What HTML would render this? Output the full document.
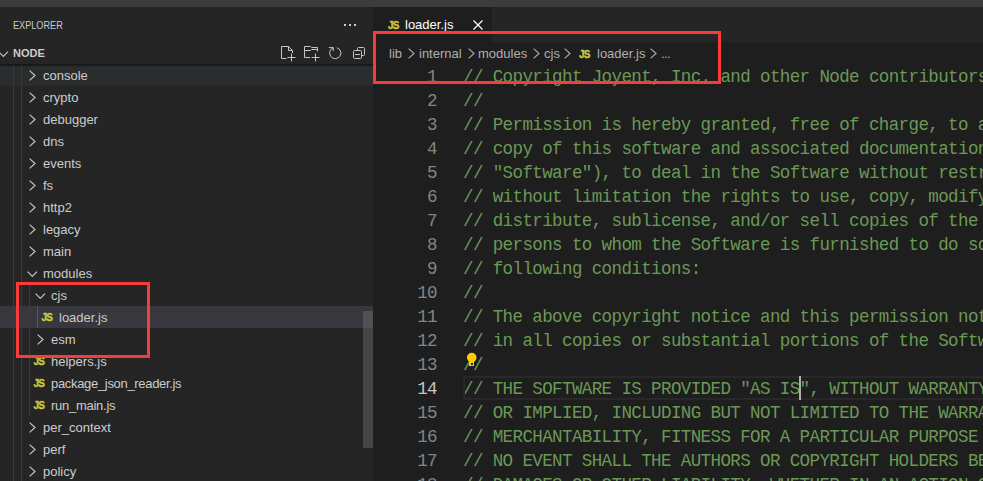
<!DOCTYPE html>
<html><head><meta charset="utf-8"><style>
*{box-sizing:border-box;margin:0;padding:0}
html,body{width:983px;height:481px;overflow:hidden;background:#1e1e1e}
body{position:relative;font-family:"Liberation Sans",sans-serif;}
.a{position:absolute}
#topstrip{left:0;top:0;width:983px;height:7px;background:#3c3c3c}
#sidebar{left:0;top:7px;width:373px;height:474px;background:#252526;overflow:hidden}
#title{left:13px;top:1px;height:35px;line-height:35px;font-size:11px;color:#cccccc;transform-origin:0 50%;transform:scaleX(0.83);white-space:nowrap}
#hdrtext{left:13px;top:35px;line-height:22px;font-size:11px;font-weight:bold;color:#cccccc}
.row{position:absolute;left:0;width:373px;height:22px;line-height:22px;font-size:13px;color:#cccccc;white-space:nowrap}
.row .t{position:absolute;top:1px}
svg{position:absolute;overflow:visible}
.guide{position:absolute;width:1px;background:#3a3a3a}
.js{position:absolute;font-weight:bold;color:#cbcb41;font-size:10px;letter-spacing:-0.9px;line-height:22px;-webkit-text-stroke:0.35px #cbcb41}
#editor{left:373px;top:7px;width:610px;height:474px;background:#1e1e1e;overflow:hidden}
#tabbar{left:0;top:0;width:610px;height:35px;background:#252526}
#tab{left:0;top:0;width:119px;height:35px;background:#1e1e1e}
#tabtxt{left:32px;top:0;line-height:35px;font-size:13px;color:#ffffff}
.crumb{position:absolute;top:36px;line-height:22px;font-size:13px;color:#b0b0b0;white-space:nowrap}
.code{position:absolute;left:0;width:610px;height:24px;line-height:24px;font-family:"Liberation Mono",monospace;font-size:17.5px;letter-spacing:-0.6017px;white-space:pre}
.ln{position:absolute;top:1px;right:546px;text-align:right;color:#858585}
.cm{position:absolute;top:1px;left:90px;color:#6a9955}
.redbox{position:absolute;border:3px solid #fb3b3b}
</style></head><body>
<div id="topstrip" class="a"></div>
<div id="sidebar" class="a"><div id="title" class="a">EXPLORER</div><div class="a" style="left:344px;top:17px;width:2px;height:2px;background:#cccccc"></div><div class="a" style="left:349px;top:17px;width:2px;height:2px;background:#cccccc"></div><div class="a" style="left:354px;top:17px;width:2px;height:2px;background:#cccccc"></div><svg class="a" style="left:-2px;top:44px" width="12" height="8"><polyline points="0.6,0.6 5.3,5.3 10,0.6" fill="none" stroke="#c5c5c5" stroke-width="1.2"/></svg><div id="hdrtext" class="a">NODE</div><div class="row" style="top:57px;background:#2a2d2e;"><svg class="a" style="left:29px;top:6px" width="8" height="12"><polyline points="0.6,0.6 6.0,5.5 0.6,10.4" fill="none" stroke="#c5c5c5" stroke-width="1.2"/></svg><span class="t" style="left:43px">console</span></div><div class="row" style="top:79px;"><svg class="a" style="left:29px;top:6px" width="8" height="12"><polyline points="0.6,0.6 6.0,5.5 0.6,10.4" fill="none" stroke="#c5c5c5" stroke-width="1.2"/></svg><span class="t" style="left:43px">crypto</span></div><div class="row" style="top:101px;"><svg class="a" style="left:29px;top:6px" width="8" height="12"><polyline points="0.6,0.6 6.0,5.5 0.6,10.4" fill="none" stroke="#c5c5c5" stroke-width="1.2"/></svg><span class="t" style="left:43px">debugger</span></div><div class="row" style="top:123px;"><svg class="a" style="left:29px;top:6px" width="8" height="12"><polyline points="0.6,0.6 6.0,5.5 0.6,10.4" fill="none" stroke="#c5c5c5" stroke-width="1.2"/></svg><span class="t" style="left:43px">dns</span></div><div class="row" style="top:145px;"><svg class="a" style="left:29px;top:6px" width="8" height="12"><polyline points="0.6,0.6 6.0,5.5 0.6,10.4" fill="none" stroke="#c5c5c5" stroke-width="1.2"/></svg><span class="t" style="left:43px">events</span></div><div class="row" style="top:167px;"><svg class="a" style="left:29px;top:6px" width="8" height="12"><polyline points="0.6,0.6 6.0,5.5 0.6,10.4" fill="none" stroke="#c5c5c5" stroke-width="1.2"/></svg><span class="t" style="left:43px">fs</span></div><div class="row" style="top:189px;"><svg class="a" style="left:29px;top:6px" width="8" height="12"><polyline points="0.6,0.6 6.0,5.5 0.6,10.4" fill="none" stroke="#c5c5c5" stroke-width="1.2"/></svg><span class="t" style="left:43px">http2</span></div><div class="row" style="top:211px;"><svg class="a" style="left:29px;top:6px" width="8" height="12"><polyline points="0.6,0.6 6.0,5.5 0.6,10.4" fill="none" stroke="#c5c5c5" stroke-width="1.2"/></svg><span class="t" style="left:43px">legacy</span></div><div class="row" style="top:233px;"><svg class="a" style="left:29px;top:6px" width="8" height="12"><polyline points="0.6,0.6 6.0,5.5 0.6,10.4" fill="none" stroke="#c5c5c5" stroke-width="1.2"/></svg><span class="t" style="left:43px">main</span></div><div class="row" style="top:255px;"><svg class="a" style="left:27px;top:9px" width="12" height="8"><polyline points="0.6,0.6 5.3,5.3 10,0.6" fill="none" stroke="#c5c5c5" stroke-width="1.2"/></svg><span class="t" style="left:43px">modules</span></div><div class="row" style="top:277px;"><svg class="a" style="left:35px;top:9px" width="12" height="8"><polyline points="0.6,0.6 5.3,5.3 10,0.6" fill="none" stroke="#c5c5c5" stroke-width="1.2"/></svg><span class="t" style="left:51px">cjs</span></div><div class="row" style="top:299px;background:#37373d;"><span class="js" style="left:41.5px;top:1px">JS</span><span class="t" style="left:59px">loader.js</span></div><div class="row" style="top:321px;"><svg class="a" style="left:37px;top:6px" width="8" height="12"><polyline points="0.6,0.6 6.0,5.5 0.6,10.4" fill="none" stroke="#c5c5c5" stroke-width="1.2"/></svg><span class="t" style="left:51px">esm</span></div><div class="row" style="top:343px;"><span class="js" style="left:33.5px;top:1px">JS</span><span class="t" style="left:51px">helpers.js</span></div><div class="row" style="top:365px;"><span class="js" style="left:33.5px;top:1px">JS</span><span class="t" style="left:51px"><span style="letter-spacing:-0.32px">package_json_reader.js</span></span></div><div class="row" style="top:387px;"><span class="js" style="left:33.5px;top:1px">JS</span><span class="t" style="left:51px"><span style="letter-spacing:-0.27px">run_main.js</span></span></div><div class="row" style="top:409px;"><svg class="a" style="left:29px;top:6px" width="8" height="12"><polyline points="0.6,0.6 6.0,5.5 0.6,10.4" fill="none" stroke="#c5c5c5" stroke-width="1.2"/></svg><span class="t" style="left:43px">per_context</span></div><div class="row" style="top:431px;"><svg class="a" style="left:29px;top:6px" width="8" height="12"><polyline points="0.6,0.6 6.0,5.5 0.6,10.4" fill="none" stroke="#c5c5c5" stroke-width="1.2"/></svg><span class="t" style="left:43px">perf</span></div><div class="row" style="top:453px;"><svg class="a" style="left:29px;top:6px" width="8" height="12"><polyline points="0.6,0.6 6.0,5.5 0.6,10.4" fill="none" stroke="#c5c5c5" stroke-width="1.2"/></svg><span class="t" style="left:43px">policy</span></div><div class="guide" style="left:13px;top:57px;height:430px"></div><div class="guide" style="left:21px;top:57px;height:430px"></div><div class="guide" style="left:29px;top:277px;height:132px"></div><div class="guide" style="left:37px;top:299px;height:22px;background:#585858"></div><div class="a" style="left:0;top:57px;width:373px;height:3px;background:linear-gradient(rgba(0,0,0,0.6),rgba(0,0,0,0))"></div><div class="a" style="left:363px;top:304px;width:10px;height:137px;background:rgba(121,121,121,0.4)"></div></div>
<div id="editor" class="a"><div id="tabbar" class="a"></div><div id="tab" class="a"><span class="js" style="left:15px;top:7.5px">JS</span><div id="tabtxt" class="a">loader.js</div><svg class="a" style="left:100px;top:13px" width="10" height="10"><path d="M0.5 0.5L9.5 9.5M9.5 0.5L0.5 9.5" stroke="#ffffff" stroke-width="1.2"/></svg></div><span class="crumb" style="left:16px">lib</span><svg class="a" style="left:35px;top:41px" width="8" height="12"><polyline points="0.6,0.6 6.0,5.5 0.6,10.4" fill="none" stroke="#a9a9a9" stroke-width="1.2"/></svg><span class="crumb" style="left:46px">internal</span><svg class="a" style="left:95px;top:41px" width="8" height="12"><polyline points="0.6,0.6 6.0,5.5 0.6,10.4" fill="none" stroke="#a9a9a9" stroke-width="1.2"/></svg><span class="crumb" style="left:105px">modules</span><svg class="a" style="left:160px;top:41px" width="8" height="12"><polyline points="0.6,0.6 6.0,5.5 0.6,10.4" fill="none" stroke="#a9a9a9" stroke-width="1.2"/></svg><span class="crumb" style="left:171px">cjs</span><svg class="a" style="left:191px;top:41px" width="8" height="12"><polyline points="0.6,0.6 6.0,5.5 0.6,10.4" fill="none" stroke="#a9a9a9" stroke-width="1.2"/></svg><span class="js" style="left:206px;top:37px">JS</span><span class="crumb" style="left:224px">loader.js</span><svg class="a" style="left:277px;top:41px" width="8" height="12"><polyline points="0.6,0.6 6.0,5.5 0.6,10.4" fill="none" stroke="#a9a9a9" stroke-width="1.2"/></svg><span class="crumb" style="left:288px;letter-spacing:-0.6px">...</span><div class="code" style="top:57px"><span class="ln" style="color:#858585">1</span><span class="cm">// Copyright Joyent, Inc. and other Node contributors.</span></div><div class="code" style="top:81px"><span class="ln" style="color:#858585">2</span><span class="cm">//</span></div><div class="code" style="top:105px"><span class="ln" style="color:#858585">3</span><span class="cm">// Permission is hereby granted, free of charge, to any person obtaining a</span></div><div class="code" style="top:129px"><span class="ln" style="color:#858585">4</span><span class="cm">// copy of this software and associated documentation files (the</span></div><div class="code" style="top:153px"><span class="ln" style="color:#858585">5</span><span class="cm">// &quot;Software&quot;), to deal in the Software without restriction, including</span></div><div class="code" style="top:177px"><span class="ln" style="color:#858585">6</span><span class="cm">// without limitation the rights to use, copy, modify, merge, publish,</span></div><div class="code" style="top:201px"><span class="ln" style="color:#858585">7</span><span class="cm">// distribute, sublicense, and/or sell copies of the Software, and to permit</span></div><div class="code" style="top:225px"><span class="ln" style="color:#858585">8</span><span class="cm">// persons to whom the Software is furnished to do so, subject to the</span></div><div class="code" style="top:249px"><span class="ln" style="color:#858585">9</span><span class="cm">// following conditions:</span></div><div class="code" style="top:273px"><span class="ln" style="color:#858585">10</span><span class="cm">//</span></div><div class="code" style="top:297px"><span class="ln" style="color:#858585">11</span><span class="cm">// The above copyright notice and this permission notice shall be included</span></div><div class="code" style="top:321px"><span class="ln" style="color:#858585">12</span><span class="cm">// in all copies or substantial portions of the Software.</span></div><div class="code" style="top:345px"><span class="ln" style="color:#858585">13</span><span class="cm">//</span></div><div class="code" style="top:369px"><span class="ln" style="color:#c6c6c6">14</span><span class="cm">// THE SOFTWARE IS PROVIDED &quot;AS IS&quot;, WITHOUT WARRANTY OF ANY KIND, EXPRESS</span></div><div class="code" style="top:393px"><span class="ln" style="color:#858585">15</span><span class="cm">// OR IMPLIED, INCLUDING BUT NOT LIMITED TO THE WARRANTIES OF</span></div><div class="code" style="top:417px"><span class="ln" style="color:#858585">16</span><span class="cm">// MERCHANTABILITY, FITNESS FOR A PARTICULAR PURPOSE AND NONINFRINGEMENT. IN</span></div><div class="code" style="top:441px"><span class="ln" style="color:#858585">17</span><span class="cm">// NO EVENT SHALL THE AUTHORS OR COPYRIGHT HOLDERS BE LIABLE FOR ANY CLAIM,</span></div><div class="code" style="top:465px"><span class="ln" style="color:#858585">18</span><span class="cm">// DAMAGES OR OTHER LIABILITY, WHETHER IN AN ACTION OF CONTRACT, TORT OR</span></div><div class="a" style="left:90px;top:369px;width:520px;height:24px;border:2px solid #282828;border-right:none"></div><div class="a" style="left:426px;top:369px;width:2px;height:24px;background:#aeafad"></div><svg class="a" style="left:0;top:0" width="610" height="474"><circle cx="98.75" cy="350.6" r="4.8" fill="#ffcc00"/><rect x="96" y="352" width="5" height="7" fill="#ffcc00"/><rect x="98" y="356" width="2" height="2" fill="#1e1e1e"/></svg></div>
<svg class="a" style="left:0;top:0" width="983" height="481" fill="none" stroke="#c5c5c5" stroke-width="1"><path d="M286.5 58.5H281.5V46.5H288.5L292.5 50.5V53"/><path d="M288.5 46.5V50.5H292.5"/><path d="M287.5 57.5H295.5M291.5 53.5V61.5"/><path d="M310 57.5H304.5V46.5H310.5L311.5 47.5H317.5V51.5"/><path d="M304.5 50.5H310.5L311.5 49.5H317.5"/><path d="M311.5 57.5H319.5M315.5 53.5V61.5"/><path d="M333.3 47.8A5.6 5.6 0 1 0 336.9 47.7"/><path d="M328.8 47.6H333.3V51.1"/><rect x="353.5" y="50.5" width="8" height="8" rx="1"/><path d="M357.5 50.5V48.5Q357.5 47.5 358.5 47.5H363.5Q364.5 47.5 364.5 48.5V54.5Q364.5 55.5 363.5 55.5H361.5"/><path d="M355 54.5H360"/></svg>
<div class="redbox" style="left:373px;top:31px;width:348px;height:53px"></div>
<div class="redbox" style="left:16px;top:282px;width:134px;height:76px"></div>
</body></html>
